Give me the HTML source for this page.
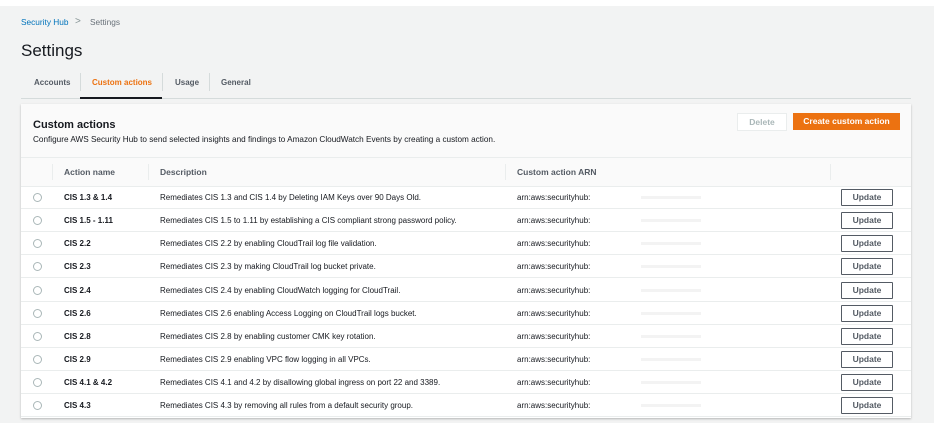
<!DOCTYPE html><html><head><style>
body{margin:0;width:934px;height:423px;background:#f2f3f3;font-family:"Liberation Sans",sans-serif;position:relative;overflow:hidden;color:#16191f}
.a{position:absolute;white-space:nowrap}
.top{position:absolute;left:0;top:0;width:934px;height:6px;background:#fff}
.card{position:absolute;left:21px;top:104px;width:890px;height:314px;background:#fff;box-shadow:0 1px 2px rgba(0,0,0,.25)}
.hdr{position:absolute;left:0;top:0;width:890px;height:53px;background:#fafafa}
.th{position:absolute;left:0;top:53px;width:890px;height:28px;background:#fafafa;border-top:1px solid #eaeded;border-bottom:1px solid #eaeded;font-size:8.5px;font-weight:bold;color:#545b64}
.row{position:absolute;left:0;width:890px;height:22px;border-bottom:1px solid #eaeded;font-size:8px}
.rad{position:absolute;left:12px;top:7px;width:7px;height:7px;border:1px solid #aab7b8;border-radius:50%}
.btn{position:absolute;left:820px;top:3px;width:50px;height:15px;border:1px solid #545b64;border-radius:1px;font-weight:bold;font-size:8.5px;text-align:center;line-height:15px;color:#545b64}
.sep{position:absolute;top:6px;width:1px;height:16px;background:#eaeded}
</style></head><body>
<div class="top"></div>
<div class="a" style="left:21px;top:17px;font-size:8.3px;color:#0073bb">Security Hub</div>
<div class="a" style="left:75px;top:16px;font-size:10px;color:#879596">&gt;</div>
<div class="a" style="left:90px;top:17px;font-size:8.3px;color:#687078">Settings</div>
<div class="a" style="left:21px;top:41px;font-size:17px;color:#16191f">Settings</div>
<div class="a" style="left:34px;top:78px;font-size:8px;font-weight:bold;color:#545b64">Accounts</div>
<div class="a" style="left:80px;top:73px;width:1px;height:18px;background:#d5dbdb"></div>
<div class="a" style="left:92px;top:78px;font-size:8px;font-weight:bold;color:#ec7211">Custom actions</div>
<div class="a" style="left:162px;top:73px;width:1px;height:18px;background:#d5dbdb"></div>
<div class="a" style="left:175px;top:78px;font-size:8px;font-weight:bold;color:#545b64">Usage</div>
<div class="a" style="left:209px;top:73px;width:1px;height:18px;background:#d5dbdb"></div>
<div class="a" style="left:221px;top:78px;font-size:8px;font-weight:bold;color:#545b64">General</div>
<div class="a" style="left:21px;top:98px;width:890px;height:1px;background:#d5dbdb"></div>
<div class="a" style="left:80px;top:97px;width:82px;height:2px;background:#16191f"></div>
<div class="card">
<div class="hdr">
<div class="a" style="left:12px;top:15px;font-size:11px;font-weight:bold">Custom actions</div>
<div class="a" style="left:12px;top:31px;font-size:8.2px;color:#16191f">Configure AWS Security Hub to send selected insights and findings to Amazon CloudWatch Events by creating a custom action.</div>
<div class="a" style="left:716px;top:9px;width:48px;height:16px;border:1px solid #eaeded;background:#fff;color:#aab7b8;font-size:8.5px;font-weight:bold;text-align:center;line-height:16px">Delete</div>
<div class="a" style="left:772px;top:9px;width:107px;height:17px;background:#ec7211;color:#fff;font-size:8.5px;font-weight:bold;text-align:center;line-height:17px">Create custom action</div>
</div>
<div class="th">
<div class="sep" style="left:31px"></div><div class="a" style="left:43px;top:9px">Action name</div>
<div class="sep" style="left:127px"></div><div class="a" style="left:139px;top:9px">Description</div>
<div class="sep" style="left:484px"></div><div class="a" style="left:496px;top:9px">Custom action ARN</div>
<div class="sep" style="left:809px"></div>
</div>
<div id="rows"></div>
</div>
<script>
var d=[["CIS 1.3 &amp; 1.4","Remediates CIS 1.3 and CIS 1.4 by Deleting IAM Keys over 90 Days Old."],["CIS 1.5 - 1.11","Remediates CIS 1.5 to 1.11 by establishing a CIS compliant strong password policy."],["CIS 2.2","Remediates CIS 2.2 by enabling CloudTrail log file validation."],["CIS 2.3","Remediates CIS 2.3 by making CloudTrail log bucket private."],["CIS 2.4","Remediates CIS 2.4 by enabling CloudWatch logging for CloudTrail."],["CIS 2.6","Remediates CIS 2.6 enabling Access Logging on CloudTrail logs bucket."],["CIS 2.8","Remediates CIS 2.8 by enabling customer CMK key rotation."],["CIS 2.9","Remediates CIS 2.9 enabling VPC flow logging in all VPCs."],["CIS 4.1 &amp; 4.2","Remediates CIS 4.1 and 4.2 by disallowing global ingress on port 22 and 3389."],["CIS 4.3","Remediates CIS 4.3 by removing all rules from a default security group."]];
var h="";d.forEach(function(r,i){h+='<div class="row" style="top:'+(82+i*23.15)+'px"><div class="rad"></div><div class="a" style="left:43px;top:7px;font-weight:bold">'+r[0]+'</div><div class="a" style="left:139px;top:7px">'+r[1]+'</div><div class="a" style="left:496px;top:7px">arn:aws:securityhub:</div><div class="a" style="left:620px;top:10px;width:60px;height:3px;background:#f3f3f3"></div><div class="btn">Update</div></div>'});
document.getElementById("rows").innerHTML=h;
</script>
</body></html>
